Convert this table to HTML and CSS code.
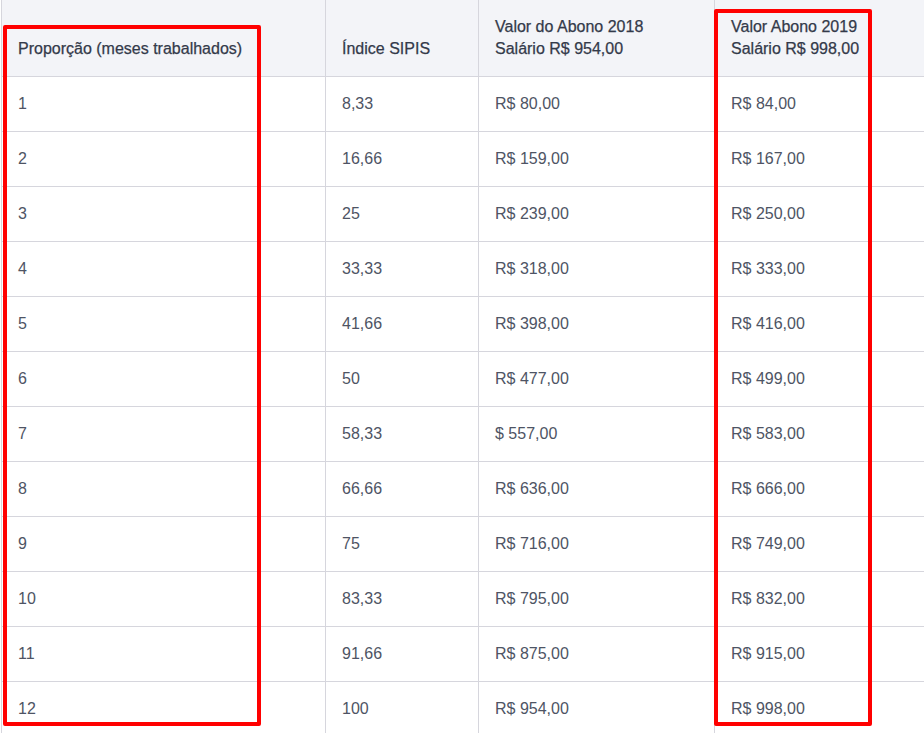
FILE: index.html
```html
<!DOCTYPE html>
<html lang="pt-BR">
<head>
<meta charset="utf-8">
<title>Abono salarial</title>
<link rel="stylesheet" href="styles.css">
</head>
<body>
<div class="wrap">
  <table class="abono">
    <colgroup>
      <col class="c1"><col class="c2"><col class="c3"><col class="c4">
    </colgroup>
    <thead>
      <tr>
        <th>Proporção (meses trabalhados)</th>
        <th>Índice SIPIS</th>
        <th>Valor do Abono 2018<br>Salário R$ 954,00</th>
        <th>Valor Abono 2019<br>Salário R$ 998,00</th>
      </tr>
    </thead>
    <tbody>
      <tr><td>1</td><td>8,33</td><td>R$ 80,00</td><td>R$ 84,00</td></tr>
      <tr><td>2</td><td>16,66</td><td>R$ 159,00</td><td>R$ 167,00</td></tr>
      <tr><td>3</td><td>25</td><td>R$ 239,00</td><td>R$ 250,00</td></tr>
      <tr><td>4</td><td>33,33</td><td>R$ 318,00</td><td>R$ 333,00</td></tr>
      <tr><td>5</td><td>41,66</td><td>R$ 398,00</td><td>R$ 416,00</td></tr>
      <tr><td>6</td><td>50</td><td>R$ 477,00</td><td>R$ 499,00</td></tr>
      <tr><td>7</td><td>58,33</td><td>$ 557,00</td><td>R$ 583,00</td></tr>
      <tr><td>8</td><td>66,66</td><td>R$ 636,00</td><td>R$ 666,00</td></tr>
      <tr><td>9</td><td>75</td><td>R$ 716,00</td><td>R$ 749,00</td></tr>
      <tr><td>10</td><td>83,33</td><td>R$ 795,00</td><td>R$ 832,00</td></tr>
      <tr><td>11</td><td>91,66</td><td>R$ 875,00</td><td>R$ 915,00</td></tr>
      <tr><td>12</td><td>100</td><td>R$ 954,00</td><td>R$ 998,00</td></tr>
    </tbody>
  </table>
  <div class="mark mark-left"></div>
  <div class="mark mark-right"></div>
</div>
</body>
</html>
```
FILE: styles.css
```css
html, body {
  margin: 0;
  padding: 0;
  background: #ffffff;
  overflow: hidden;
}
.wrap {
  position: relative;
  padding-left: 1px;
  font-family: "Liberation Sans", Arial, sans-serif;
  font-size: 16px;
}
.abono {
  border-collapse: collapse;
  table-layout: fixed;
  width: 923px;
}
.c1 { width: 324px; }
.c2 { width: 153px; }
.c3 { width: 236px; }
.c4 { width: 210px; }
.abono th,
.abono td {
  border: 1px solid #d6d6dd;
  text-align: left;
  line-height: 22px;
  padding: 0 16px;
}
.abono thead tr {
  background: #f3f4f8;
}
.abono th {
  font-weight: normal;
  color: #333a4a;
  height: 60px;
  vertical-align: bottom;
  padding-bottom: 16px;
  padding-top: 0;
  border-top: none;
  -webkit-text-stroke: 0.25px #333a4a;
}
.abono td {
  color: #4e5464;
  height: 54px;
  vertical-align: middle;
}
.mark {
  position: absolute;
  border: 4px solid #ff0000;
  border-radius: 2px;
}
.mark-left {
  left: 3px;
  top: 25px;
  width: 250px;
  height: 693px;
}
.mark-right {
  left: 714px;
  top: 9px;
  width: 150px;
  height: 709px;
}
```
